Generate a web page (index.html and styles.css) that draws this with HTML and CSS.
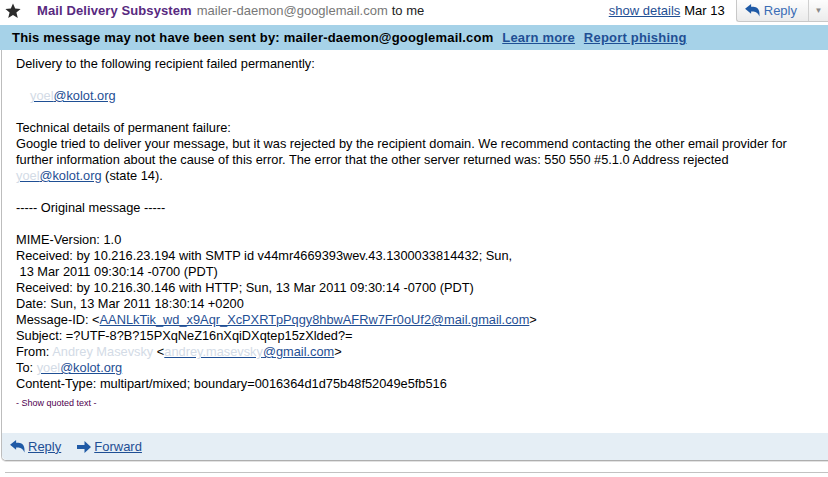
FILE: index.html
```html
<!DOCTYPE html>
<html lang="en">
<head>
  <meta charset="UTF-8">
  <meta name="viewport" content="width=device-width, initial-scale=1.0">
  <title>Mail Delivery Subsystem</title>
  <link rel="stylesheet" href="styles.css">
</head>
<body>
  <div class="msg-head">
    <svg class="star" viewBox="0 0 16 16" width="16" height="16">
      <polygon points="8,0.5 10.2,5.6 15.6,6 11.4,9.5 12.8,15 8,12 3.2,15 4.6,9.5 0.4,6 5.8,5.6" />
    </svg>
    <span class="sender">Mail Delivery Subsystem</span>
    <span class="sender-mail">mailer-daemon@googlemail.com</span>
    <span class="to">to me</span>
    <div class="head-right">
      <a class="link" href="#">show details</a>
      <span class="date">Mar 13</span>
      <div class="reply-btn">
        <span class="reply-main">
          <svg class="ico" viewBox="0 0 16 14" width="15" height="13">
            <path d="M0 5 L6.5 0 V3 H9 C12.8 3 15.5 6 15.5 10 V13.5 C14.3 10.3 12.2 8 9 8 H6.5 V10.5 Z" />
          </svg>
          Reply
        </span>
        <span class="reply-more">&#9660;</span>
      </div>
    </div>
  </div>

  <div class="warn-bar">
    This message may not have been sent by: mailer-daemon@googlemail.com
    <a class="link" href="#">Learn more</a>
    <a class="link" href="#">Report phishing</a>
  </div>

  <div class="msg-card">
    <div class="msg-body">
      <p>Delivery to the following recipient failed permanently:</p>
      <p class="recipient"><a class="link" href="#"><span class="hidden">yoel</span>@kolot.org</a></p>
      <p>Technical details of permanent failure:<br>
      Google tried to deliver your message, but it was rejected by the recipient domain. We recommend contacting the other email provider for<br>
      further information about the cause of this error. The error that the other server returned was: 550 550 #5.1.0 Address rejected<br>
      <a class="link" href="#"><span class="hidden">yoel</span>@kolot.org</a> (state 14).</p>
      <p>----- Original message -----</p>
      <p>MIME-Version: 1.0<br>
      Received: by 10.216.23.194 with SMTP id v44mr4669393wev.43.1300033814432; Sun,<br>
      &nbsp;13 Mar 2011 09:30:14 -0700 (PDT)<br>
      Received: by 10.216.30.146 with HTTP; Sun, 13 Mar 2011 09:30:14 -0700 (PDT)<br>
      Date: Sun, 13 Mar 2011 18:30:14 +0200<br>
      Message-ID: &lt;<a class="link" href="#">AANLkTik_wd_x9Aqr_XcPXRTpPqgy8hbwAFRw7Fr0oUf2@mail.gmail.com</a>&gt;<br>
      Subject: =?UTF-8?B?15PXqNeZ16nXqiDXqtep15zXlded?=<br>
      From: <span class="hidden">Andrey Masevsky</span> &lt;<a class="link" href="#"><span class="hidden">andrey.masevsky</span>@gmail.com</a>&gt;<br>
      To: <a class="link" href="#"><span class="hidden">yoel</span>@kolot.org</a><br>
      Content-Type: multipart/mixed; boundary=0016364d1d75b48f52049e5fb516</p>
      <div class="quoted">- Show quoted text -</div>
    </div>
    <div class="msg-foot">
      <a class="foot-act" href="#">
        <svg class="ico" viewBox="0 0 16 14" width="15" height="13">
          <path d="M0 5 L6.5 0 V3 H9 C12.8 3 15.5 6 15.5 10 V13.5 C14.3 10.3 12.2 8 9 8 H6.5 V10.5 Z" />
        </svg>
        <span class="link">Reply</span>
      </a>
      <a class="foot-act" href="#">
        <svg class="ico" viewBox="0 0 14 12" width="14" height="12">
          <path d="M0 4 H7.5 V0 L14 6 L7.5 12 V8 H0 Z" />
        </svg>
        <span class="link">Forward</span>
      </a>
    </div>
  </div>
  <div class="next-rule"></div>
</body>
</html>
```

FILE: styles.css
```css
body {
  margin: 0;
  background: #fff;
  color: #000;
  font-family: "Liberation Sans", Arial, sans-serif;
  font-size: 13px;
  line-height: 16px;
}
.link {
  color: #1f4f94;
  text-decoration: underline;
}
.ico {
  fill: #1f5aa6;
  display: block;
}

.msg-head {
  height: 25px;
  display: flex;
  align-items: flex-start;
}
.star {
  fill: #2b2b2b;
  margin: 3px 0 0 5px;
}
.sender {
  color: #58297f;
  font-weight: bold;
  margin: 3px 0 0 16px;
  letter-spacing: 0.1px;
}
.sender-mail {
  color: #777;
  margin: 3px 0 0 5px;
}
.to {
  color: #222;
  margin: 3px 0 0 4px;
}
.head-right {
  margin-left: auto;
  display: flex;
  align-items: flex-start;
}
.head-right .link {
  margin-top: 3px;
}
.date {
  margin: 3px 0 0 4px;
}
.reply-btn {
  margin-left: 11px;
  height: 21px;
  display: flex;
  border: 1px solid #c8c8c8;
  border-top: none;
  border-right: none;
  border-radius: 0 0 0 3px;
  background: linear-gradient(#fdfdfd, #ebebeb);
}
.reply-main {
  display: flex;
  align-items: center;
  gap: 4px;
  padding: 0 11px 0 8px;
  color: #3a6cb5;
}
.reply-more {
  width: 19px;
  border-left: 1px solid #d0d0d0;
  color: #8a8a8a;
  font-size: 8px;
  text-align: center;
  line-height: 21px;
}

.warn-bar {
  height: 25px;
  line-height: 25px;
  background: #a6d2e8;
  font-weight: bold;
  padding-left: 12px;
  white-space: nowrap;
  letter-spacing: 0.2px;
}
.warn-bar .link {
  margin-left: 5px;
}

.msg-card {
  margin-left: 1px;
  border-left: 1px solid #bdbdbd;
  border-bottom: 1px solid #aeaeae;
  border-radius: 0 0 0 5px;
  box-shadow: 0 1px 0 #e2e2e2;
}
.msg-body {
  padding: 6px 0 0 14px;
  height: 377px;
  white-space: nowrap;
  font-size: 12.8px;
}
.msg-body p {
  margin: 0 0 16px;
}
.recipient {
  padding-left: 14px;
}
.hidden {
  color: #d3dbe6;
}
.quoted {
  margin-top: -11px;
  font-size: 9px;
  line-height: 12px;
  color: #500050;
}

.msg-foot {
  height: 27px;
  background: #e5eef5;
  border-radius: 0 0 0 5px;
  display: flex;
  align-items: center;
  gap: 16px;
  padding-left: 8px;
}
.foot-act {
  display: flex;
  align-items: center;
  gap: 3px;
  text-decoration: none;
}

.next-rule {
  margin: 11px 0 0 5px;
  border-top: 1px solid #c2c2c2;
}
```
